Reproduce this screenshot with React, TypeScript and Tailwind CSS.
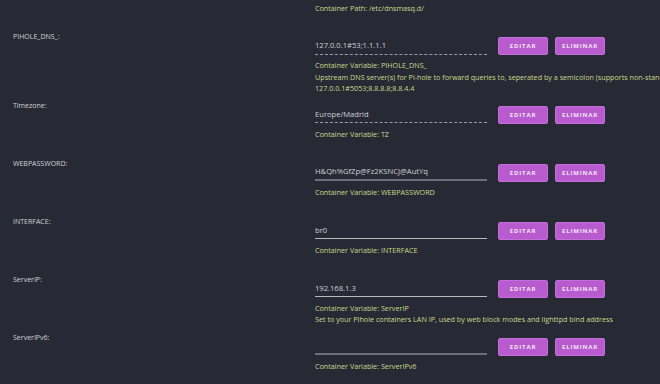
import React from 'react'

type Field = {
  label: string
  value: string
  line: string
  hints: string[]
}

const fields: Field[] = [
  {
    label: 'PIHOLE_DNS_:',
    value: '127.0.0.1#53;1.1.1.1',
    line: 'border-b border-dashed border-[#9a9ca4]',
    hints: [
      'Container Variable: PIHOLE_DNS_',
      'Upstream DNS server(s) for Pi-hole to forward queries to, seperated by a semicolon (supports non-standard ports)',
      '127.0.0.1#5053;8.8.8.8;8.8.4.4',
    ],
  },
  {
    label: 'Timezone:',
    value: 'Europe/Madrid',
    line: 'border-b border-dashed border-[#9a9ca4]',
    hints: ['Container Variable: TZ'],
  },
  {
    label: 'WEBPASSWORD:',
    value: 'H&Qh%GfZp@Fz2KSNCJ@AutYq',
    line: 'border-b-2 border-[#6d6f79]',
    hints: ['Container Variable: WEBPASSWORD'],
  },
  {
    label: 'INTERFACE:',
    value: 'br0',
    line: 'border-b border-[#b8b9be]',
    hints: ['Container Variable: INTERFACE'],
  },
  {
    label: 'ServerIP:',
    value: '192.168.1.3',
    line: 'border-b border-[#b8b9be]',
    hints: [
      'Container Variable: ServerIP',
      'Set to your Pihole containers LAN IP, used by web block modes and lighttpd bind address',
    ],
  },
  {
    label: 'ServerIPv6:',
    value: '',
    line: 'border-b-2 border-[#6d6f79]',
    hints: ['Container Variable: ServerIPv6'],
  },
]

function ActionButton({ children }: { children: React.ReactNode }) {
  return (
    <button
      type="button"
      className="w-[50px] h-[18px] rounded-[2px] bg-[#b75bcf] border border-[#c46edb] text-[#f3e6f7] text-[6px] font-bold tracking-[0.14em] leading-none"
    >
      {children}
    </button>
  )
}

function FieldRow({ field }: { field: Field }) {
  return (
    <div className="flex">
      <div className="w-[315px] shrink-0 pl-[13px] pt-[5px] text-[7px] leading-[12px] text-[#d2d3d8] font-medium">
        {field.label}
      </div>

      <div className="flex-1 min-w-0 pt-[11px]">
        <div className="flex items-center h-[18px]">
          <div
            className={`w-[172px] h-[17px] flex items-center text-[7.6px] text-[#d0d1d5] ${field.line}`}
          >
            {field.value}
          </div>
          <div className="flex gap-[7px] ml-[11px]">
            <ActionButton>EDITAR</ActionButton>
            <ActionButton>ELIMINAR</ActionButton>
          </div>
        </div>

        <div className="mt-[5px] min-h-[24px] text-[7.2px] leading-[11.6px] text-[#cbd88c] font-medium whitespace-nowrap">
          {field.hints.map((hint) => (
            <div key={hint}>{hint}</div>
          ))}
        </div>
      </div>
    </div>
  )
}

export default function App() {
  return (
    <div
      className="w-[660px] h-[384px] overflow-hidden bg-[#272935]"
      style={{ fontFamily: '"Open Sans", "Liberation Sans", Arial, sans-serif' }}
    >
      <div className="pl-[315px] pt-[2px] h-[26px] text-[7.2px] leading-[12px] text-[#cbd88c] font-medium whitespace-nowrap">
        Container Path: /etc/dnsmasq.d/
      </div>

      {fields.map((field) => (
        <FieldRow key={field.label} field={field} />
      ))}
    </div>
  )
}
